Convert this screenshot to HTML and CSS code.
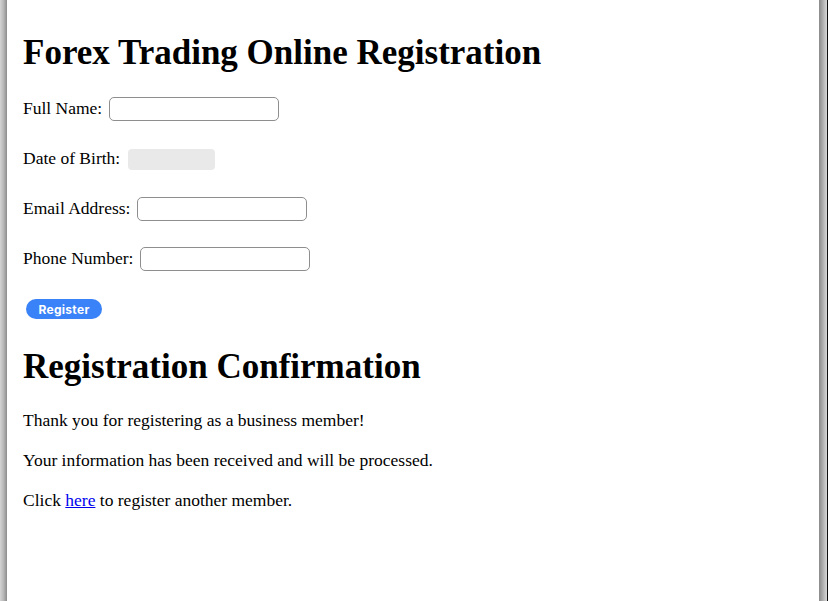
FILE: index.html
```html
<!DOCTYPE html>
<html lang="en">
<head>
<meta charset="utf-8">
<title>Forex Trading Online Registration</title>
<link rel="stylesheet" href="styles.css">
</head>
<body>
<div class="window">
  <div class="edge-left"></div>
  <main class="content">
    <h1 class="title">Forex Trading Online Registration</h1>
    <form class="form">
      <div class="row">
        <label class="label" for="name">Full Name:</label>
        <input class="field" id="name" type="text">
      </div>
      <div class="row">
        <label class="label" for="dob">Date of Birth:</label>
        <span class="date-field" id="dob"></span>
      </div>
      <div class="row">
        <label class="label" for="email">Email Address:</label>
        <input class="field" id="email" type="email">
      </div>
      <div class="row">
        <label class="label" for="phone">Phone Number:</label>
        <input class="field" id="phone" type="tel">
      </div>
      <div class="row">
        <button class="btn" type="button">Register</button>
      </div>
    </form>
    <h1 class="title second">Registration Confirmation</h1>
    <p class="text">Thank you for registering as a business member!</p>
    <p class="text">Your information has been received and will be processed.</p>
    <p class="text">Click <a class="link" href="#">here</a> to register another member.</p>
  </main>
  <div class="edge-right"></div>
  <div class="edge-black"></div>
</div>
</body>
</html>
```
FILE: styles.css
```css
html, body {
  margin: 0;
  padding: 0;
  background: #ffffff;
}

.window {
  display: flex;
  width: 828px;
  height: 601px;
  overflow: hidden;
  font-family: "Liberation Serif", "Times New Roman", serif;
  color: #000;
}

.edge-left {
  width: 7px;
  flex: none;
  background: linear-gradient(to right, #d4d4d4, #b8b8b8 50%, #8c8c8c);
}

.edge-right {
  width: 8px;
  flex: none;
  background: linear-gradient(to right, #8a8a8a, #b0b0b0 50%, #d8d8d8);
}

.edge-black {
  width: 1px;
  flex: none;
  background: #111;
}

.content {
  flex: 1;
  padding: 8px 0 0 16px;
}

.title {
  font-size: 35px;
  line-height: 40px;
  font-weight: bold;
  margin: 25px 0 24px 0;
}

.title.second {
  margin: 26px 0 23px 0;
}

.form {
  display: flex;
  flex-direction: column;
  gap: 26px;
}

.row {
  display: flex;
  align-items: center;
  gap: 7px;
  height: 24px;
  font-size: 17.5px;
}

.label {
  position: relative;
  top: -1px;
}

.field {
  box-sizing: border-box;
  width: 170px;
  height: 24px;
  margin: 0;
  border: 1px solid #8e8e8e;
  border-radius: 5px;
  background: #fff;
}

.date-field {
  display: block;
  width: 87px;
  height: 21px;
  margin-left: 1px;
  border-radius: 4px;
  background: #e9e9e9;
}

.btn {
  margin: 0 0 0 3px;
  width: 76px;
  height: 20px;
  padding: 0;
  border: none;
  border-radius: 10px;
  background: #3a82f7;
  color: #fff;
  font-family: Inter, "Noto Sans", sans-serif;
  font-size: 12px;
  font-weight: 700;
  letter-spacing: 0.3px;
}

.text {
  font-size: 17.5px;
  line-height: 20px;
  margin: 0 0 20px 0;
}

.link {
  color: #0000ee;
  text-decoration: underline;
}
```
